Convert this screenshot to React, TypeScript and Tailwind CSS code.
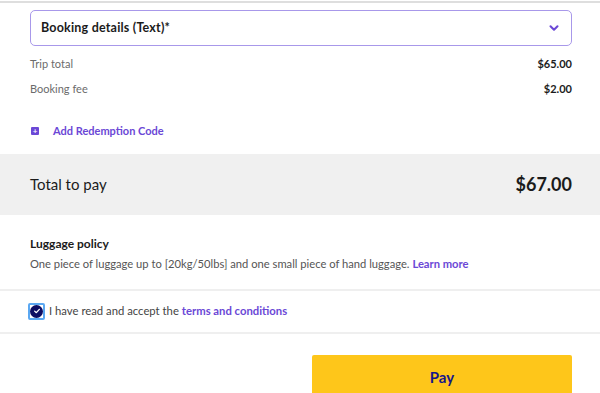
import { ChevronDown } from "lucide-react";

export default function App() {
  return (
    <div className="w-[600px] h-[393px] overflow-hidden bg-white font-['Lato',sans-serif] text-[#1b1b1b]">
      <div className="border-t-2 border-[#dedede] mt-[1px]" />

      <div className="pl-[30px] pr-[28px] pt-[7px]">
        <button className="w-full h-[36px] flex items-center justify-between pl-[10px] pr-[10px] border border-[#a898ea] rounded-[5px] bg-white">
          <span className="text-[12.5px] font-bold tracking-[0.2px]">Booking details (Text)*</span>
          <ChevronDown className="w-[14px] h-[14px] text-[#6b48d6]" strokeWidth={3.5} />
        </button>

        <div className="mt-[11px] flex justify-between items-center h-[14px] text-[11px]">
          <span className="text-[#6b6b6b]">Trip total</span>
          <span className="font-bold">$65.00</span>
        </div>
        <div className="mt-[11px] flex justify-between items-center h-[14px] text-[11px]">
          <span className="text-[#6b6b6b]">Booking fee</span>
          <span className="font-bold">$2.00</span>
        </div>

        <div className="mt-[28px] flex items-center gap-[14px] h-[14px]">
          <span className="w-[8px] h-[8px] ml-[1px] bg-[#6b48d6] rounded-[1px] flex items-center justify-center text-white text-[8px] leading-none font-bold">+</span>
          <span className="text-[11px] font-bold text-[#6b48d6]">Add Redemption Code</span>
        </div>
      </div>

      <div className="mt-[16px] h-[61px] bg-[#f0f0f0] pl-[30px] pr-[28px] flex items-center justify-between">
        <span className="text-[15px]">Total to pay</span>
        <span className="text-[18px] font-bold">$67.00</span>
      </div>

      <div className="px-[30px] pt-[20px] pb-[16px] border-b-2 border-[#efefef]">
        <div className="text-[12px] font-bold">Luggage policy</div>
        <div className="mt-[3px] text-[11.2px] text-[#555]">
          One piece of luggage up to [20kg/50lbs] and one small piece of hand luggage.{" "}
          <span className="font-bold text-[#6b48d6]">Learn more</span>
        </div>
      </div>

      <div className="px-[28px] h-[43px] flex items-center border-b-2 border-[#efefef]">
        <span className="w-[17px] h-[17px] border-2 border-[#5ba8f2] rounded-[2px] flex items-center justify-center">
          <span className="w-[13px] h-[13px] rounded-full bg-[#0d0d62] flex items-center justify-center">
            <svg viewBox="0 0 12 12" className="w-[8px] h-[8px]">
              <path d="M2.5 6.2 L5 8.5 L9.5 3.5" fill="none" stroke="white" strokeWidth="2" strokeLinecap="round" strokeLinejoin="round" />
            </svg>
          </span>
        </span>
        <span className="ml-[4px] text-[11.3px] text-[#444]">
          I have read and accept the <span className="font-bold text-[#6b48d6]">terms and conditions</span>
        </span>
      </div>

      <div className="pl-[28px] pr-[28px] pt-[21px] flex justify-end">
        <button className="w-[260px] h-[44px] bg-[#fec61a] rounded-[2px] text-[15px] font-bold text-[#15158a]">
          Pay
        </button>
      </div>
    </div>
  );
}
